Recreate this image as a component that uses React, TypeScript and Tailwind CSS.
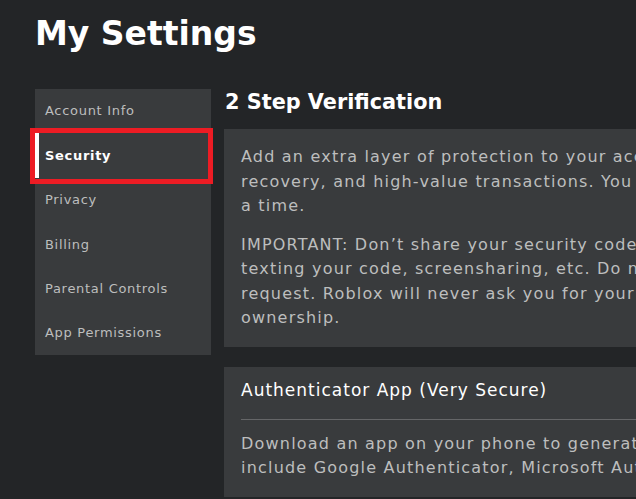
const navItems = [
  'Account Info',
  'Security',
  'Privacy',
  'Billing',
  'Parental Controls',
  'App Permissions',
];

function Sidebar({ active }: { active: string }) {
  return (
    <nav className="relative w-[176px] shrink-0 self-start bg-[#393b3d]">
      {navItems.map((item) => {
        const isActive = item === active;
        return (
          <div
            key={item}
            className={`relative flex h-[44.4px] items-center pl-[10px] text-[13px] tracking-[0.7px] ${
              isActive ? 'font-bold text-white' : 'font-normal text-[#bdbebe]'
            }`}
          >
            {isActive && <span className="absolute left-0 top-0 h-full w-[4px] bg-white" />}
            {item}
          </div>
        );
      })}
      {/* annotation box round the active item */}
      <div className="pointer-events-none absolute left-[-5px] top-[39px] h-[56px] w-[183px] border-[5px] border-[#ed1c24]" />
    </nav>
  );
}

export default function App() {
  return (
    <div
      className="h-[499px] w-[636px] overflow-hidden bg-[#232527] pl-[35px] text-[#bdbebe]"
      style={{ fontFamily: '"DejaVu Sans", "Open Sans", sans-serif' }}
    >
      <h1 className="pt-[11px] text-[33px] font-bold leading-[46px] text-white">My Settings</h1>

      <div className="mt-[32px] flex gap-[13px]">
        <Sidebar active="Security" />

        <main className="w-[760px] shrink-0">
          <h2 className="pl-[1px] text-[20.8px] font-bold leading-[26px] text-white">2 Step Verification</h2>

          <section className="mt-[14px] bg-[#393b3d] px-[17px] pb-[16px] pt-[16px] text-[16px] leading-[24.5px] tracking-[1.2px]">
            <p className="whitespace-nowrap">
              Add an extra layer of protection to your account. You will be asked for a code during login,
              <br />
              recovery, and high-value transactions. You can only have one security method enabled at
              <br />a time.
            </p>
            <p className="mt-[14px] whitespace-nowrap">
              IMPORTANT: Don’t share your security code with anyone. This includes things like
              <br />
              texting your code, screensharing, etc. Do not share your security code with anyone on
              <br />
              request. Roblox will never ask you for your security code. This can lead to a loss of account
              <br />
              ownership.
            </p>
          </section>

          <section className="mt-[20px] bg-[#393b3d] px-[17px] pb-[16px] pt-[11px]">
            <h3 className="text-[17px] leading-[24px] tracking-[1px] text-white">Authenticator App (Very Secure)</h3>
            <div className="mt-[17px] h-px bg-[#656668]" />
            <p className="mt-[12px] whitespace-nowrap text-[16px] leading-[24.5px] tracking-[1.2px]">
              Download an app on your phone to generate codes for your account. Popular apps
              <br />
              include Google Authenticator, Microsoft Authenticator, and Twilio’s Authy.
            </p>
          </section>
        </main>
      </div>
    </div>
  );
}
